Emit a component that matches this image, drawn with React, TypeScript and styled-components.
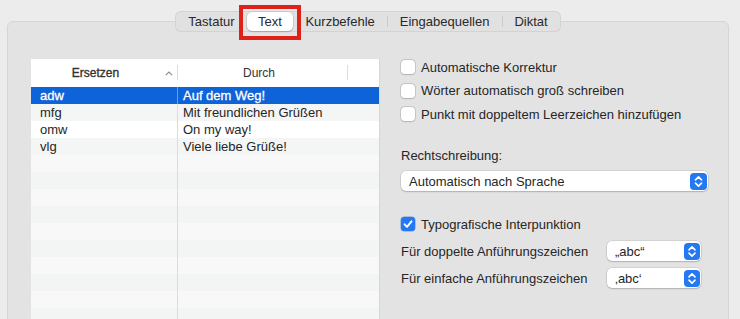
import React from "react";
import styled, { createGlobalStyle } from "styled-components";

const GlobalStyle = createGlobalStyle`
  html, body { margin: 0; padding: 0; }
  body { background: #ececec; }
  * { box-sizing: border-box; }
`;

const Window = styled.div`
  width: 740px;
  height: 319px;
  overflow: hidden;
  background: #ececec;
  padding: 11px 11px 0 7px;
  font-family: "Liberation Sans", Arial, sans-serif;
  font-size: 13px;
  color: #262626;
  display: flex;
  flex-direction: column;
`;

const Segmented = styled.div`
  position: relative;
  z-index: 1;
  align-self: center;
  display: flex;
  height: 21px;
  padding: 1px;
  margin-bottom: -11px;
  border-radius: 6px;
  background: #e1e1e1;
  box-shadow: inset 0 0 0 1px #d3d3d3;
`;

const Segment = styled.div<{ $active?: boolean; $divider?: boolean }>`
  position: relative;
  display: flex;
  align-items: center;
  justify-content: center;
  height: 19px;
  padding: 0 ${(p) => (p.$active ? "11px" : "12.5px")};
  border-radius: 5px;
  white-space: nowrap;
  color: #2a2a2a;
  background: ${(p) => (p.$active ? "#ffffff" : "transparent")};
  box-shadow: ${(p) =>
    p.$active ? "0 0 0 0.5px rgba(0,0,0,0.12), 0 1px 1.5px rgba(0,0,0,0.18)" : "none"};
  &::before {
    content: "";
    display: ${(p) => (p.$divider ? "block" : "none")};
    position: absolute;
    left: 0;
    top: 4px;
    bottom: 4px;
    width: 1px;
    background: #cacaca;
  }
`;

const Highlight = styled.div`
  position: absolute;
  left: -8px;
  right: -8px;
  top: -7px;
  bottom: -9px;
  border: 4px solid #df2219;
  pointer-events: none;
`;

const GroupBox = styled.div`
  flex: none;
  height: 330px;
  display: flex;
  align-items: flex-start;
  gap: 21px;
  padding: 37px 0 0 23px;
  background: #e3e3e3;
  border: 1px solid #d5d5d5;
  border-radius: 6px;
`;

const Table = styled.div`
  width: 349px;
  height: 290px;
  background: #ffffff;
  border-right: 1px solid #d6d6d6;
  display: flex;
  flex-direction: column;
`;

const HeaderRow = styled.div`
  display: flex;
  height: 28px;
  flex: none;
  font-size: 12px;
  color: #333333;
`;

const HeaderCell = styled.div<{ $width?: number; $sorted?: boolean }>`
  position: relative;
  flex: ${(p) => (p.$width ? `0 0 ${p.$width}px` : "1 1 auto")};
  display: flex;
  align-items: center;
  justify-content: center;
  padding-right: ${(p) => (p.$sorted ? "18px" : "8px")};
  -webkit-text-stroke: ${(p) => (p.$sorted ? "0.35px #333" : "0")};
  &::after {
    content: "";
    position: absolute;
    right: 0;
    top: 6px;
    bottom: 7px;
    width: 1px;
    background: #dedede;
  }
`;

const HeaderFiller = styled.div`
  flex: 1;
`;

const SortIcon = styled.svg`
  position: absolute;
  right: 5px;
  top: 12px;
`;

const Row = styled.div<{ $bg: string; $selected?: boolean }>`
  display: flex;
  height: 17px;
  flex: none;
  background: ${(p) => p.$bg};
  color: ${(p) => (p.$selected ? "#ffffff" : "#262626")};
  -webkit-text-stroke: ${(p) => (p.$selected ? "0.3px #ffffff" : "0")};
`;

const Cell = styled.div<{ $first?: boolean; $selected?: boolean }>`
  flex: ${(p) => (p.$first ? "0 0 147px" : "1 1 auto")};
  display: flex;
  align-items: center;
  padding-left: ${(p) => (p.$first ? "9px" : "5px")};
  border-right: ${(p) =>
    p.$first ? `1px solid ${p.$selected ? "#6d9fe6" : "#dcdcdc"}` : "none"};
  white-space: nowrap;
  line-height: 17px;
`;

const Options = styled.div`
  width: 307px;
  display: flex;
  flex-direction: column;
  margin-top: -1px;
`;

const CheckGroup = styled.div<{ $mt: number }>`
  display: flex;
  flex-direction: column;
  gap: 5.5px;
  margin-top: ${(p) => p.$mt}px;
`;

const CheckRow = styled.label`
  display: flex;
  align-items: center;
  gap: 6px;
  height: 18px;
  white-space: nowrap;
`;

const Box = styled.span<{ $checked?: boolean }>`
  flex: none;
  width: 14px;
  height: 14px;
  border-radius: 3.5px;
  display: flex;
  align-items: center;
  justify-content: center;
  background: ${(p) => (p.$checked ? "#2479f3" : "#ffffff")};
  box-shadow: ${(p) =>
    p.$checked
      ? "0 0 0 0.5px rgba(0,80,200,0.5)"
      : "0 0 0 0.5px rgba(0,0,0,0.22), 0 0.5px 1.5px rgba(0,0,0,0.12)"};
`;

const Label = styled.div<{ $mt: number }>`
  height: 16px;
  line-height: 16px;
  margin-top: ${(p) => p.$mt}px;
  white-space: nowrap;
`;

const Popup = styled.div<{ $width?: number; $mt?: number; $h?: number }>`
  flex: none;
  width: ${(p) => (p.$width ? `${p.$width}px` : "100%")};
  height: ${(p) => p.$h ?? 20}px;
  margin-top: ${(p) => p.$mt ?? 0}px;
  display: flex;
  align-items: center;
  justify-content: space-between;
  padding: 0 1px 0 8px;
  background: #ffffff;
  border-radius: 5px;
  box-shadow: 0 0 0 0.5px rgba(0,0,0,0.14), 0 1px 1.5px rgba(0,0,0,0.16);
  white-space: nowrap;
`;

const Stepper = styled.svg`
  flex: none;
  display: block;
`;

const QuoteRow = styled.div<{ $mt: number }>`
  display: flex;
  align-items: center;
  justify-content: space-between;
  width: 300px;
  margin-top: ${(p) => p.$mt}px;
`;

const StepperIcon = ({ w, h }: { w: number; h: number }) => (
  <Stepper width={w} height={h} viewBox={`0 0 ${w} ${h}`}>
    <rect x="0" y="0" width={w} height={h} rx="4" fill="#2479f3" />
    <path
      d={`M${w / 2 - 3} ${h / 2 - 1.6} L${w / 2} ${h / 2 - 4.6} L${w / 2 + 3} ${h / 2 - 1.6}`}
      stroke="#fff"
      strokeWidth="1.6"
      fill="none"
      strokeLinecap="round"
      strokeLinejoin="round"
    />
    <path
      d={`M${w / 2 - 3} ${h / 2 + 1.6} L${w / 2} ${h / 2 + 4.6} L${w / 2 + 3} ${h / 2 + 1.6}`}
      stroke="#fff"
      strokeWidth="1.6"
      fill="none"
      strokeLinecap="round"
      strokeLinejoin="round"
    />
  </Stepper>
);

const CheckMark = () => (
  <svg width="14" height="14" viewBox="0 0 14 14">
    <path
      d="M3.6 7.3 L6 9.8 L10.5 4.3"
      stroke="#fff"
      strokeWidth="1.9"
      fill="none"
      strokeLinecap="round"
      strokeLinejoin="round"
    />
  </svg>
);

const Check = ({ label, checked }: { label: string; checked?: boolean }) => (
  <CheckRow>
    <Box $checked={checked}>{checked && <CheckMark />}</Box>
    {label}
  </CheckRow>
);

const entries = [
  ["adw", "Auf dem Weg!"],
  ["mfg", "Mit freundlichen Grüßen"],
  ["omw", "On my way!"],
  ["vlg", "Viele liebe Grüße!"],
];

const rowBg = (i: number) => {
  if (i === 0) return "#0f63d8";
  if (i < entries.length) return i % 2 ? "#f4f5f5" : "#ffffff";
  return i % 2 ? "#f3f4f4" : "#f8f8f8";
};

export default function App() {
  const rows = Array.from({ length: 16 }, (_, i) => entries[i] ?? ["", ""]);
  return (
    <>
      <GlobalStyle />
      <Window>
        <Segmented>
          <Segment>Tastatur</Segment>
          <Segment $active>
            Text
            <Highlight />
          </Segment>
          <Segment>Kurzbefehle</Segment>
          <Segment $divider>Eingabequellen</Segment>
          <Segment $divider>Diktat</Segment>
        </Segmented>
        <GroupBox>
          <Table>
            <HeaderRow>
              <HeaderCell $width={147} $sorted>
                Ersetzen
                <SortIcon width="8" height="5" viewBox="0 0 8 5">
                  <path d="M0.8 4.2 L4 1 L7.2 4.2" stroke="#8c8c8c" strokeWidth="1.1" fill="none" />
                </SortIcon>
              </HeaderCell>
              <HeaderCell $width={170}>Durch</HeaderCell>
              <HeaderFiller />
            </HeaderRow>
            {rows.map(([a, b], i) => (
              <Row key={i} $bg={rowBg(i)} $selected={i === 0}>
                <Cell $first $selected={i === 0}>{a}</Cell>
                <Cell>{b}</Cell>
              </Row>
            ))}
          </Table>
          <Options>
            <CheckGroup $mt={0}>
              <Check label="Automatische Korrektur" />
              <Check label="Wörter automatisch groß schreiben" />
              <Check label="Punkt mit doppeltem Leerzeichen hinzufügen" />
            </CheckGroup>
            <Label $mt={25}>Rechtschreibung:</Label>
            <Popup $mt={7}>
              Automatisch nach Sprache
              <StepperIcon w={17} h={17} />
            </Popup>
            <CheckGroup $mt={24}>
              <Check label="Typografische Interpunktion" checked />
            </CheckGroup>
            <QuoteRow $mt={8}>
              Für doppelte Anführungszeichen
              <Popup $width={94}>
                „abc“
                <StepperIcon w={16} h={17} />
              </Popup>
            </QuoteRow>
            <QuoteRow $mt={7}>
              Für einfache Anführungszeichen
              <Popup $width={94}>
                ‚abc‘
                <StepperIcon w={16} h={17} />
              </Popup>
            </QuoteRow>
          </Options>
        </GroupBox>
      </Window>
    </>
  );
}
